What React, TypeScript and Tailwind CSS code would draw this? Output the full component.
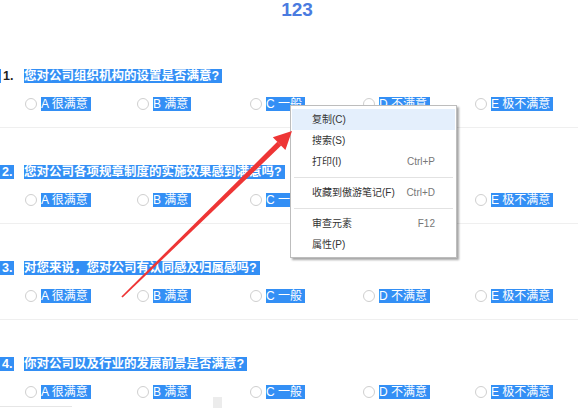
import React from "react";

const FONT = { fontFamily: '"Liberation Sans", "Noto Sans CJK SC", sans-serif' };

const questions = [
  "您对公司组织机构的设置是否满意?",
  "您对公司各项规章制度的实施效果感到满意吗?",
  "对您来说，您对公司有认同感及归属感吗?",
  "你对公司以及行业的发展前景是否满意?",
];

const options = ["A 很满意", "B 满意", "C 一般", "D 不满意", "E 极不满意"];

function Block({ idx, text, last }: { idx: number; text: string; last: boolean }) {
  return (
    <div className="pt-[37px]">
      <div className="flex h-[14px] items-center">
        <div className="w-[24px] h-[14px] flex">
          {idx === 0 ? (
            <>
              <span className="inline-block w-[1px] h-[14px] bg-[#338ff5]" />
              <span className="inline-block h-[14px] leading-[14px] pl-[2px] text-[12.5px] font-bold text-[#222]">
                {idx + 1}.
              </span>
            </>
          ) : (
            <span className="inline-block h-[14px] leading-[14px] pl-[2px] pr-[2px] w-[14px] bg-[#338ff5] text-[12.5px] font-bold text-white">
              {idx + 1}.
            </span>
          )}
        </div>
        <span className="inline-block h-[14px] leading-[14px] bg-[#338ff5] text-white text-[12.5px] font-bold pr-[3px] whitespace-nowrap">
          {text}
        </span>
      </div>
      <div className="mt-[14px] h-[14px] pl-[25px] grid grid-cols-[112px_113px_113px_112px_1fr] items-center">
        {options.map((o) => (
          <div key={o} className="flex items-center gap-[4px]">
            <span className="inline-block w-[12px] h-[12px] rounded-full border border-[#cfcfcf] bg-white shrink-0" />
            <span className="inline-block h-[14px] leading-[14px] bg-[#338ff5] text-white text-[12px] pr-[3px] whitespace-nowrap">
              {o}
            </span>
          </div>
        ))}
      </div>
      {!last && <div className="mt-[16px] h-[1px] bg-[#efefef]" />}
    </div>
  );
}

function MenuItem({ label, shortcut, active }: { label: string; shortcut?: string; active?: boolean }) {
  return (
    <div
      className={
        "mx-[1px] h-[21px] flex items-center justify-between pl-[20px] pr-[20px] text-[10px] leading-[21px] " +
        (active ? "bg-[#e4effc]" : "")
      }
    >
      <span className="text-[#333]">{label}</span>
      {shortcut && <span className="text-[#777]">{shortcut}</span>}
    </div>
  );
}

function Sep() {
  return (
    <div className="h-[10px] flex items-center px-[3px]">
      <div className="h-[1px] w-full bg-[#e2e2e2]" />
    </div>
  );
}

export default function App() {
  return (
    <div className="relative w-[578px] h-[408px] overflow-hidden bg-white" style={FONT}>
      <div className="h-[20px] pl-[16px] text-center text-[19px] leading-[20px] font-bold text-[#4a7be0]">123</div>
      <div className="mt-[12px]">
        {questions.map((q, i) => (
          <Block key={i} idx={i} text={q} last={i === questions.length - 1} />
        ))}
      </div>

      {/* faint bottom remnants */}
      <div className="absolute left-[213px] top-[397px] w-[9px] h-[11px] bg-[#ececec]" />
      <div className="absolute left-0 top-[406px] w-[72px] h-[1px] bg-[#e6e6e6]" />

      {/* context menu */}
      <div className="absolute left-[290px] top-[105px] w-[167px] h-[153px] bg-white border border-[#bdbdbd] shadow-[2px_2px_2px_rgba(0,0,0,0.35)] py-[3px]">
        <MenuItem label="复制(C)" active />
        <MenuItem label="搜索(S)" />
        <MenuItem label="打印(I)" shortcut="Ctrl+P" />
        <Sep />
        <MenuItem label="收藏到傲游笔记(F)" shortcut="Ctrl+D" />
        <Sep />
        <MenuItem label="审查元素" shortcut="F12" />
        <MenuItem label="属性(P)" />
      </div>

      {/* red arrow */}
      <svg className="absolute left-0 top-0" width="578" height="408" viewBox="0 0 578 408">
        <polygon points="122.6,297.6 121.4,296.4 277.3,141.8 281.2,145.6" fill="#ee3535" />
        <polygon points="292,131 272.8,137.2 285.4,150" fill="#ee3535" />
      </svg>
    </div>
  );
}
